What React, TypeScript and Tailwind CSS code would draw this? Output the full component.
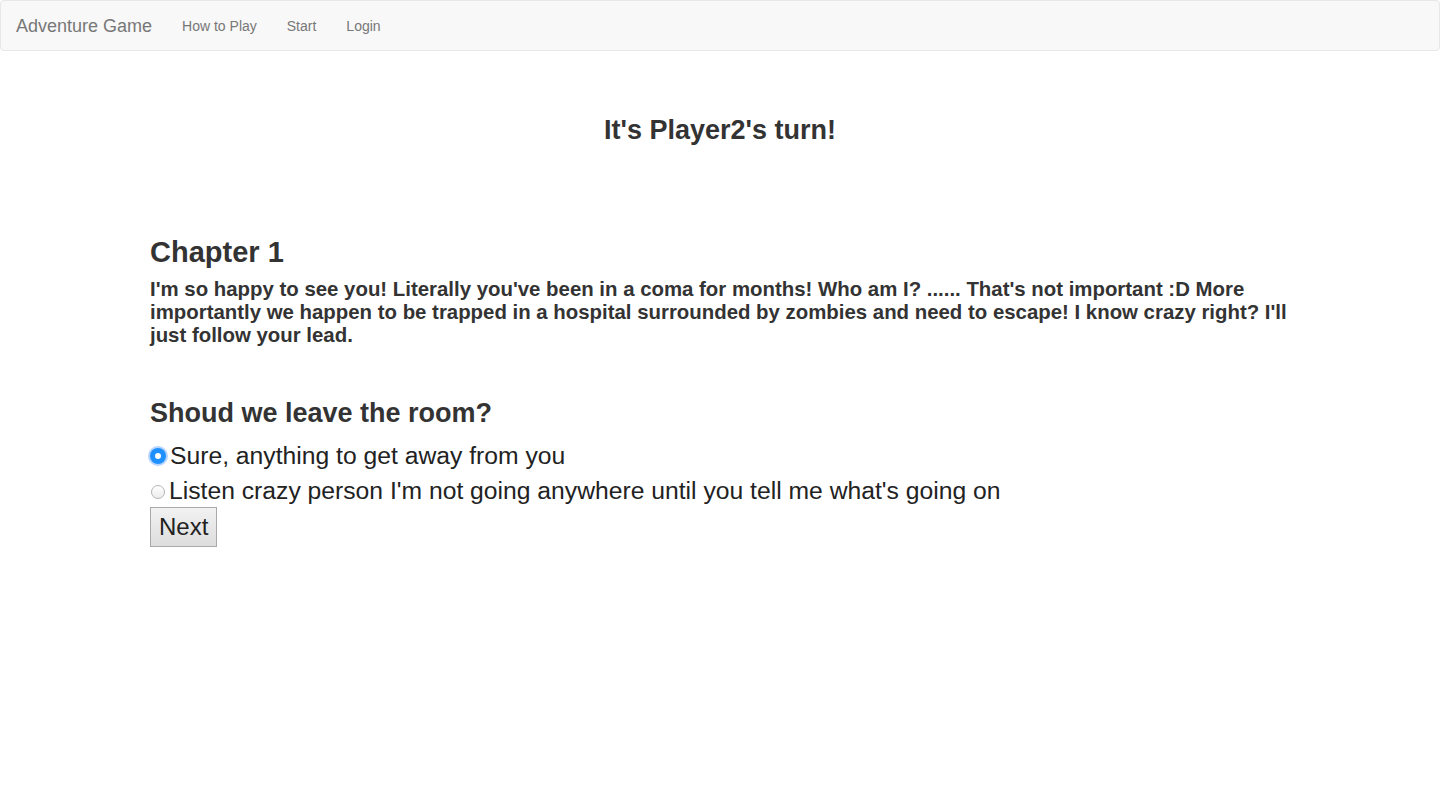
const navLinks = ["How to Play", "Start", "Login"];

const options = [
  { label: "Sure, anything to get away from you", checked: true },
  { label: "Listen crazy person I'm not going anywhere until you tell me what's going on", checked: false },
];

const Radio = ({ checked }: { checked: boolean }) =>
  checked ? (
    <span className="mt-[10px] inline-flex h-[16px] w-[16px] shrink-0 items-center justify-center rounded-full bg-[#1e90ff] shadow-[0_0_0_2px_rgba(90,160,255,0.45)]">
      <span className="h-[6px] w-[6px] rounded-full bg-white" />
    </span>
  ) : (
    <span className="mt-[12px] ml-[1px] inline-block h-[14px] w-[14px] shrink-0 rounded-full border border-[#b5b5b5] bg-gradient-to-b from-white to-[#ececec]" />
  );

export default function App() {
  return (
    <div className="min-h-screen bg-white text-[#333] font-['Helvetica_Neue','Liberation_Sans',Arial,sans-serif]">
      <nav className="flex h-[51px] items-center rounded-[4px] border border-[#e7e7e7] bg-[#f8f8f8]">
        <a className="px-[15px] text-[18px] leading-[20px] text-[#777]">Adventure Game</a>
        <ul className="flex">
          {navLinks.map((l) => (
            <li key={l}>
              <a className="block px-[15px] text-[14px] leading-[20px] text-[#777]">{l}</a>
            </li>
          ))}
        </ul>
      </nav>

      <div className="mx-auto w-[1170px] px-[15px]">
        <h3 className="mt-[64px] text-center text-[27px] font-semibold leading-[30px]">It's Player2's turn!</h3>

        <h2 className="mt-[91px] text-[29px] font-semibold leading-[32px]">Chapter 1</h2>
        <h4 className="mt-[10px] text-[20.4px] font-bold leading-[23px]">
          I'm so happy to see you! Literally you've been in a coma for months! Who am I? ...... That's not
          important :D More importantly we happen to be trapped in a hospital surrounded by zombies and need to
          escape! I know crazy right? I'll just follow your lead.
        </h4>

        <h3 className="mt-[51px] text-[27px] font-semibold leading-[30px]">Shoud we leave the room?</h3>
        <form className="mt-[10px]">
          {options.map((o) => (
            <label key={o.label} className="flex items-start gap-[4px] text-[24.7px] leading-[35px] text-[#222]">
              <Radio checked={o.checked} />
              <span>{o.label}</span>
            </label>
          ))}
          <button
            type="button"
            className="-mt-[1px] h-[40px] border border-[#a9a9a9] bg-gradient-to-b from-[#f2f2f2] to-[#dddddd] px-[8px] text-[24px] text-[#222]"
          >
            Next
          </button>
        </form>
      </div>
    </div>
  );
}
